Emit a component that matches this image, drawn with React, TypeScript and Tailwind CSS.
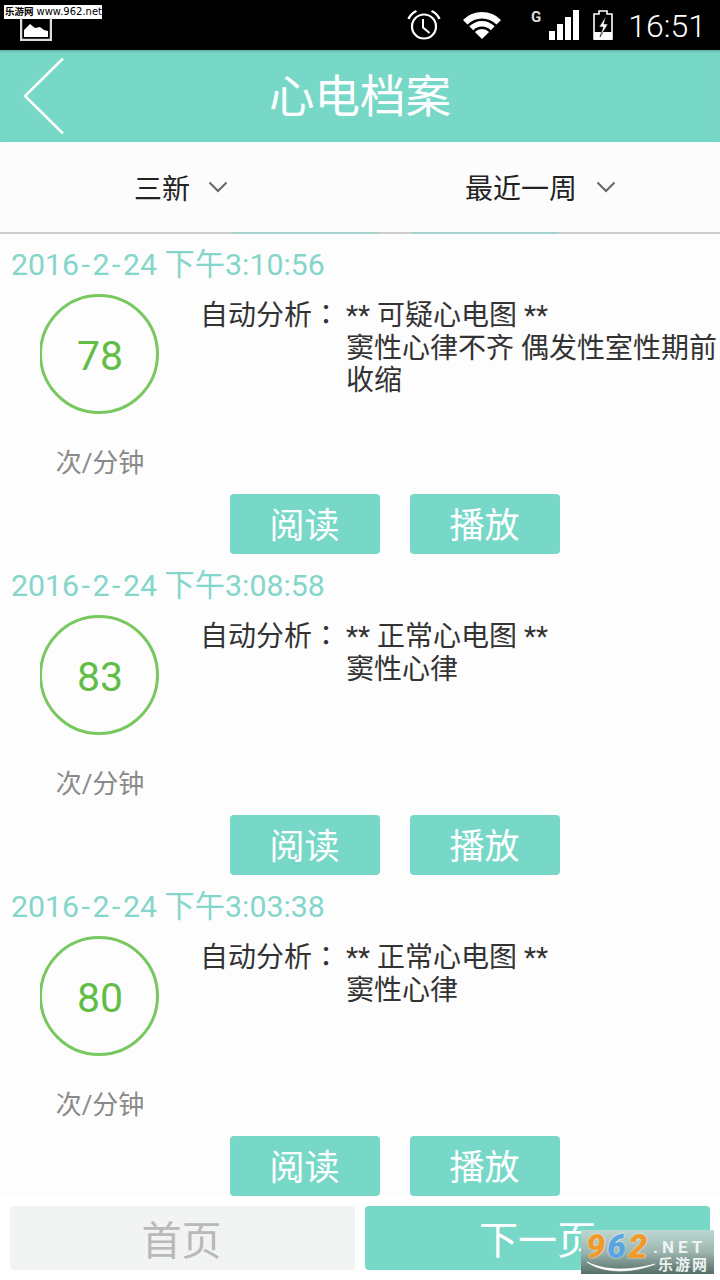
const cjk = "font-['Roboto','Noto_Sans_CJK_SC',sans-serif]";

const records = [
  {
    date: ['2016', '2', '24'],
    time: '下午3:10:56',
    rate: 78,
    title: '** 可疑心电图 **',
    detail: '窦性心律不齐 偶发性室性期前收缩',
  },
  { date: ['2016', '2', '24'], time: '下午3:08:58', rate: 83, title: '** 正常心电图 **', detail: '窦性心律' },
  { date: ['2016', '2', '24'], time: '下午3:03:38', rate: 80, title: '** 正常心电图 **', detail: '窦性心律' },
];

function Chevron() {
  return (
    <svg width="20" height="12" viewBox="0 0 20 12" fill="none">
      <path d="M1.500 1.500L10 10l8.500-8.500" stroke="#666666" strokeWidth="2" />
    </svg>
  );
}

function StatusIcons() {
  return (
    <div className="flex h-[50px] items-start text-white">
      <svg width="34" height="32" viewBox="0 0 34 32" fill="none" stroke="white" className="mt-[9px]">
        <circle cx="17" cy="17.500" r="12" strokeWidth="2.200" />
        <path d="M16 10v8.500l6.500 5.500" strokeWidth="2" />
        <path d="M1.500 10C3 6.500 6 3.500 9.500 2M32.500 10C31 6.500 28 3.500 24.500 2" strokeWidth="2.400" />
      </svg>
      <svg width="38" height="27" viewBox="0 0 38 27" fill="white" className="ml-[22px] mt-[12px]">
        <path d="M0 7.900A27 27 0 0 1 38 7.900L33.500 12.500A20.500 20.500 0 0 0 4.500 12.500z" />
        <path d="M6.300 14.300A18 18 0 0 1 31.700 14.300L27.800 18.200A12.500 12.500 0 0 0 10.200 18.200z" />
        <path d="M11.900 19.900A10 10 0 0 1 26.100 19.900L19 27z" />
      </svg>
      <span className="ml-[30px] mt-[8px] text-[15px] font-bold leading-[18px] text-[#dddddd]">G</span>
      <div className="ml-[8px] mt-[10px] flex h-[30px] items-end gap-[2px]">
        <span className="h-[9px] w-[6px] bg-white" />
        <span className="h-[16px] w-[6px] bg-white" />
        <span className="h-[23px] w-[6px] bg-white" />
        <span className="h-[30px] w-[6px] bg-white" />
      </div>
      <svg width="20" height="30" viewBox="0 0 20 30" className="ml-[14px] mt-[10px]">
        <path d="M6 1h8v3h5v25H1V4h5z" fill="none" stroke="white" strokeWidth="1.600" />
        <path d="M1 22h18v8H1z" fill="white" />
        <path d="M13 6L6 17h4l-3 10 8-13h-4z" fill="white" stroke="black" strokeWidth="0.600" />
      </svg>
    </div>
  );
}

function RecordItem({ date, time, rate, title, detail }: (typeof records)[number]) {
  return (
    <div className="h-[321px] shrink-0">
      <div className="h-[42px] pl-[11px] text-[30.300px] leading-[44px] text-[#84d6cb]">
        {date[0]}
        <span className="px-[2.500px]">-</span>
        {date[1]}
        <span className="px-[2.500px]">-</span>
        {date[2]} {time}
      </div>
      <div className="mt-[9px] flex h-[188px]">
        <div className="flex w-[200px] flex-col">
          <div className="ml-[40px] h-[120px] w-[119px] shrink-0 overflow-hidden">
            <div className="-ml-[1px] flex h-[120px] w-[120px] items-center justify-center rounded-full border-[3px] border-[#78c860] pl-[2px] pt-[6px] text-[41px] text-[#62bd46]">
              {rate}
            </div>
          </div>
          <div className="mt-[29px] shrink-0 text-center text-[26px] leading-[40px] text-[#8a8a8a]">次/分钟</div>
        </div>
        <div className="flex flex-1 pt-[6px] text-[28px] leading-[32.500px] text-[#333333]">
          <span className="w-[146px] shrink-0">
            自动分析<span className="font-['Roboto','Noto_Sans_CJK_TC',sans-serif]">：</span>
          </span>
          <div className="w-[374px]">
            <div>{title}</div>
            <div>{detail}</div>
          </div>
        </div>
      </div>
      <div className="ml-[230px] mt-[12px] flex gap-[30px]">
        <button className="h-[60px] w-[150px] rounded-[4px] bg-[#78d8c8] pr-[1px] pt-[6px] text-[35px] text-white">阅读</button>
        <button className="h-[60px] w-[150px] rounded-[4px] bg-[#78d8c8] pr-[1px] pt-[6px] text-[35px] text-white">播放</button>
      </div>
    </div>
  );
}

export default function App() {
  return (
    <div className={`relative flex h-[1280px] w-[720px] flex-col overflow-hidden bg-white ${cjk}`}>
      <div className="flex h-[50px] shrink-0 items-center justify-end bg-black pr-[14px]">
        <StatusIcons />
        <span className="ml-[15px] pt-[2px] text-[32px] font-light leading-none text-white">16:51</span>
      </div>

      <div className="relative flex h-[92px] shrink-0 items-center justify-center bg-[#78d8c8] pt-[5px] shadow-[inset_0_3px_3px_-2px_rgba(0,0,0,0.25)]">
        <svg width="42" height="78" viewBox="0 0 42 78" fill="none" className="absolute left-[22px] top-[7px]">
          <path d="M41 1.500L3 39l38 37.500" stroke="white" strokeWidth="2.500" />
        </svg>
        <span className="text-[45.500px] text-white">心电档案</span>
      </div>

      <div className="flex h-[90px] shrink-0 items-center bg-[#fcfcfc] text-[28px] text-[#222222]">
        <div className="flex w-[360px] items-center pl-[134px]">
          <span className="pt-[5px]">三新</span>
          <span className="ml-[18px]"><Chevron /></span>
        </div>
        <div className="flex items-center pl-[105px]">
          <span className="pt-[5px]">最近一周</span>
          <span className="ml-[19px]"><Chevron /></span>
        </div>
      </div>

      <div className="flex h-[2px] shrink-0 bg-[#cccccc] pl-[232px]">
        <div className="h-[2px] w-[146px] bg-[#a3d3cc]" />
        <div className="ml-[34px] h-[2px] w-[146px] bg-[#a3d3cc]" />
      </div>

      <div className="flex flex-1 flex-col overflow-hidden bg-[#fdfdfd] pt-[9px]">
        {records.map((record) => (
          <RecordItem key={record.time} {...record} />
        ))}
      </div>

      <div className="flex h-[84px] shrink-0 gap-[10px] bg-white p-[10px]">
        <button className="h-[64px] w-[345px] rounded-[4px] bg-[#f2f4f4] pr-[2px] pt-[6px] text-[40px] text-[#b9b9b9]">首页</button>
        <button className="h-[64px] w-[345px] rounded-[4px] bg-[#78d8c8] pt-[6px] text-[39px] text-white">下一页</button>
      </div>

      {/* watermarks */}
      <div className="absolute left-[4px] top-[5px] flex h-[14px] w-[98px] items-center whitespace-nowrap bg-white pl-[1px] leading-none text-black">
        <span className="text-[9.500px] font-bold">乐游网</span>
        <span className="ml-[3px] font-['DejaVu_Sans',sans-serif] text-[10px]">www.962.net</span>
      </div>
      <svg width="32" height="23" viewBox="0 0 32 23" className="absolute left-[20px] top-[18px]">
        <path d="M1 0v22h30V0" fill="none" stroke="#dddddd" strokeWidth="2.500" />
        <path d="M4 19v-7l6-6 5 4 5-1 4 3 4 1v6z" fill="white" />
      </svg>
      <div className="absolute left-[581px] top-[1230px] h-[44px] w-[133px] bg-gradient-to-b from-[#bcd8d2] via-[#9db5af] to-[#567069]">
        <div className="flex items-start pl-[5px] text-[34px] font-black italic leading-[32px] tracking-[2px] [text-shadow:0_0_2px_white]">
          <span className="text-[#f09a2c]">9</span>
          <span className="text-[#5aa5e0]">6</span>
          <span className="text-[#f09a2c]">2</span>
        </div>
        <div className="absolute left-[72px] top-[9px] text-[17px] font-bold leading-none tracking-[4px] text-[#eef3f2]">.NET</div>
        <div className="absolute left-[77px] top-[28px] text-[15px] font-bold leading-none tracking-[2px] text-[#eef3f2]">乐游网</div>
        <svg width="72" height="14" viewBox="0 0 72 14" fill="none" className="absolute left-[4px] top-[29px]">
          <path d="M2 3C20 12 45 12 70 5C45 15 18 14 2 3z" fill="white" stroke="white" strokeWidth="0.800" />
        </svg>
      </div>
    </div>
  );
}
